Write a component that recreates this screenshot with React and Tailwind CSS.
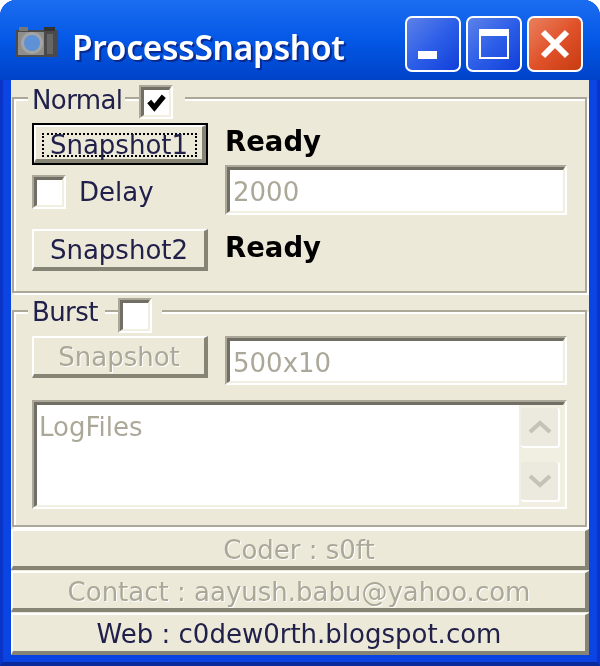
const sans = 'font-["DejaVu_Sans",sans-serif]'

function Sunken({ className, innerClass = '', children }) {
  return (
    <div className={`border-2 border-t-[#aca899] border-l-[#aca899] border-r-white border-b-white ${className}`}>
      <div className={`h-full w-full bg-white border-t-[3px] border-l-[3px] border-r-2 border-b-2 border-t-[#716f64] border-l-[#716f64] border-r-[#f1efe2] border-b-[#f1efe2] ${innerClass}`}>
        {children}
      </div>
    </div>
  )
}

function Raised({ className = '', disabled, children }) {
  return (
    <div className={`flex items-center justify-center whitespace-nowrap bg-[#ece9d8] border-t-2 border-l-2 border-r-4 border-b-4 border-t-white border-l-white border-r-[#868474] border-b-[#868474] text-[26px] pt-[3px] ${disabled ? 'text-[#aca899] [text-shadow:1px_1px_0_#fff]' : 'text-[#20204a]'} ${className}`}>
      {children}
    </div>
  )
}

function Check({ className = '', checked }) {
  return (
    <Sunken className={`shrink-0 ${className}`}>
      {checked && (
        <svg viewBox="0 0 24 24" className="w-full h-full">
          <path d="M5 11 L10 17 L19 6" fill="none" stroke="#000" strokeWidth="5" />
        </svg>
      )}
    </Sunken>
  )
}

function WinButton({ className, children }) {
  return (
    <div className={`w-[56px] h-[56px] rounded-[7px] border-2 border-white flex items-center justify-center ${className}`}>
      {children}
    </div>
  )
}

function ScrollBtn({ up }) {
  return (
    <div className="w-[39px] h-[40px] rounded-[3px] bg-[#ece9de] border-b-2 border-r-2 border-white flex items-center justify-center">
      <svg viewBox="0 0 24 14" className="w-[24px] h-[14px]">
        <path d={up ? 'M2 12 L12 3 L22 12' : 'M2 2 L12 11 L22 2'} fill="none" stroke="#c4c3b8" strokeWidth="4" />
      </svg>
    </div>
  )
}

export default function App() {
  return (
    <div className={`w-[600px] h-[666px] bg-white overflow-hidden blur-[0.7px] ${sans}`}>
      <div className="w-full h-full rounded-t-[16px] flex flex-col border-x-[3px] border-b-[4px] border-x-[#0a33c8] border-b-[#0a2a9c] px-[8px] pb-[7px] bg-[#0a45e4]">
        {/* title bar */}
        <div className="-mx-[11px] h-[80px] shrink-0 rounded-t-[16px] flex items-center pl-[16px] pr-[17px] bg-gradient-to-b from-[#1a6cf0] via-[#0458e6] to-[#0042c8]">
          <svg viewBox="0 0 42 32" className="w-[42px] h-[32px] shrink-0 mt-[4px]">
            <rect x="0" y="4" width="42" height="27" fill="#4a4a4a" />
            <rect x="3" y="1" width="9" height="4" fill="#777" />
            <rect x="28" y="1" width="11" height="4" fill="#333" />
            <rect x="2" y="6" width="26" height="23" fill="#8e8e8e" />
            <circle cx="16" cy="17" r="11" fill="#a4a4a4" />
            <circle cx="16" cy="17" r="8" fill="#5f91d6" />
            <rect x="31" y="8" width="6" height="20" fill="#666" />
          </svg>
          <span className='ml-[14px] text-white text-[33.5px] font-["Noto_Sans",sans-serif] font-semibold tracking-[-0.3px] [text-shadow:2px_2px_0_#0a2a90] mt-[14px]'>ProcessSnapshot</span>
          <div className="ml-auto flex gap-[5px] mt-[8px]">
            <WinButton className="bg-gradient-to-br from-[#5c80e8] via-[#2d5ee8] to-[#0f3ed8] items-end justify-start pl-[11px] pb-[11px]">
              <div className="w-[19px] h-[8px] bg-white" />
            </WinButton>
            <WinButton className="bg-gradient-to-br from-[#5c80e8] via-[#2d5ee8] to-[#0f3ed8]">
              <div className="w-[30px] h-[30px] border-2 border-t-[7px] border-white" />
            </WinButton>
            <WinButton className="bg-gradient-to-br from-[#e8805c] via-[#e0522a] to-[#c83c10]">
              <svg viewBox="0 0 32 32" className="w-[32px] h-[32px]">
                <path d="M4 4 L28 28 M28 4 L4 28" stroke="#fff" strokeWidth="6" />
              </svg>
            </WinButton>
          </div>
        </div>

        {/* client */}
        <div className="flex-1 bg-[#ece9d8] flex flex-col pt-[17px]">
          {/* Normal */}
          <div className="ml-[1px] w-[575px] h-[196px] border-2 border-[#aca899] shadow-[inset_2px_2px_0_#fff,2px_2px_0_#fff] pl-[18px]">
            <div className="-mt-[14px] mb-[5px] h-[33px] w-fit flex items-start -ml-[4px]">
              <span className="h-[33px] text-[26px] leading-[30px] text-[#20204a] w-[97px] pl-[4px] bg-[#ece9d8] tracking-[-0.6px]">Normal</span>
              <span className="w-[14px]" />
              <Check className="w-[34px] h-[34px] bg-[#ece9d8]" checked />
              <span className="w-[12px] h-[33px] bg-[#ece9d8]" />
            </div>
            <div className="flex items-start h-[42px]">
              <div className="w-[176px] h-[42px] border-2 border-black shrink-0">
                <Raised className="w-full h-full">
                  <span className="w-[155px] text-center border-2 border-dotted border-black leading-[20px]">Snapshot1</span>
                </Raised>
              </div>
              <span className="ml-[17px] text-[27.5px] leading-[36px] font-bold text-black">Ready</span>
            </div>
            <div className="flex items-center h-[50px]">
              <Check className="w-[34px] h-[34px] mt-[4px]" />
              <span className="ml-[13px] w-[146px] text-[26px] pt-[4px] text-[#20204a]">Delay</span>
              <Sunken className="w-[342px] h-[50px]" innerClass="text-[26px] leading-[44px] pl-[3px] text-[#aca899]">2000</Sunken>
            </div>
            <div className="flex items-start mt-[14px]">
              <Raised className="w-[176px] h-[42px]">Snapshot2</Raised>
              <span className="ml-[17px] text-[27.5px] leading-[36px] font-bold text-black">Ready</span>
            </div>
          </div>

          {/* Burst */}
          <div className="ml-[1px] mt-[17px] w-[575px] h-[217px] border-2 border-[#aca899] shadow-[inset_2px_2px_0_#fff,2px_2px_0_#fff] pl-[18px]">
            <div className="-mt-[14px] mb-[3px] h-[35px] w-fit flex items-start -ml-[4px]">
              <span className="h-[35px] text-[26px] leading-[28px] text-[#20204a] w-[77px] pl-[4px] bg-[#ece9d8] tracking-[-0.6px]">Burst</span>
              <span className="w-[13px]" />
              <Check className="w-[34px] h-[35px] bg-[#ece9d8]" />
              <span className="w-[10px] h-[35px] bg-[#ece9d8]" />
            </div>
            <div className="flex items-start">
              <Raised className="w-[176px] h-[42px]" disabled>Snapshot</Raised>
              <Sunken className="ml-[17px] w-[342px] h-[49px]" innerClass="text-[26px] leading-[44px] pl-[3px] text-[#aca899]">500x10</Sunken>
            </div>
            <Sunken className="mt-[15px] w-[535px] h-[109px]" innerClass="flex text-[26px] leading-[44px] text-[#aca899]">
              <span className="pl-[2px] flex-1">LogFiles</span>
              <div className="w-[44px] bg-[#f1efe2] flex flex-col justify-between pl-[2px] pt-[3px] pb-[3px]">
                <ScrollBtn up />
                <ScrollBtn />
              </div>
            </Sunken>
          </div>

          {/* footer */}
          <div className="mt-[2px] flex flex-col gap-[1px]">
            <Raised className="h-[41px]" disabled>Coder : s0ft</Raised>
            <Raised className="h-[41px]" disabled>Contact : aayush.babu@yahoo.com</Raised>
            <Raised className="h-[42px]">Web : c0dew0rth.blogspot.com</Raised>
          </div>
        </div>
      </div>
    </div>
  )
}
